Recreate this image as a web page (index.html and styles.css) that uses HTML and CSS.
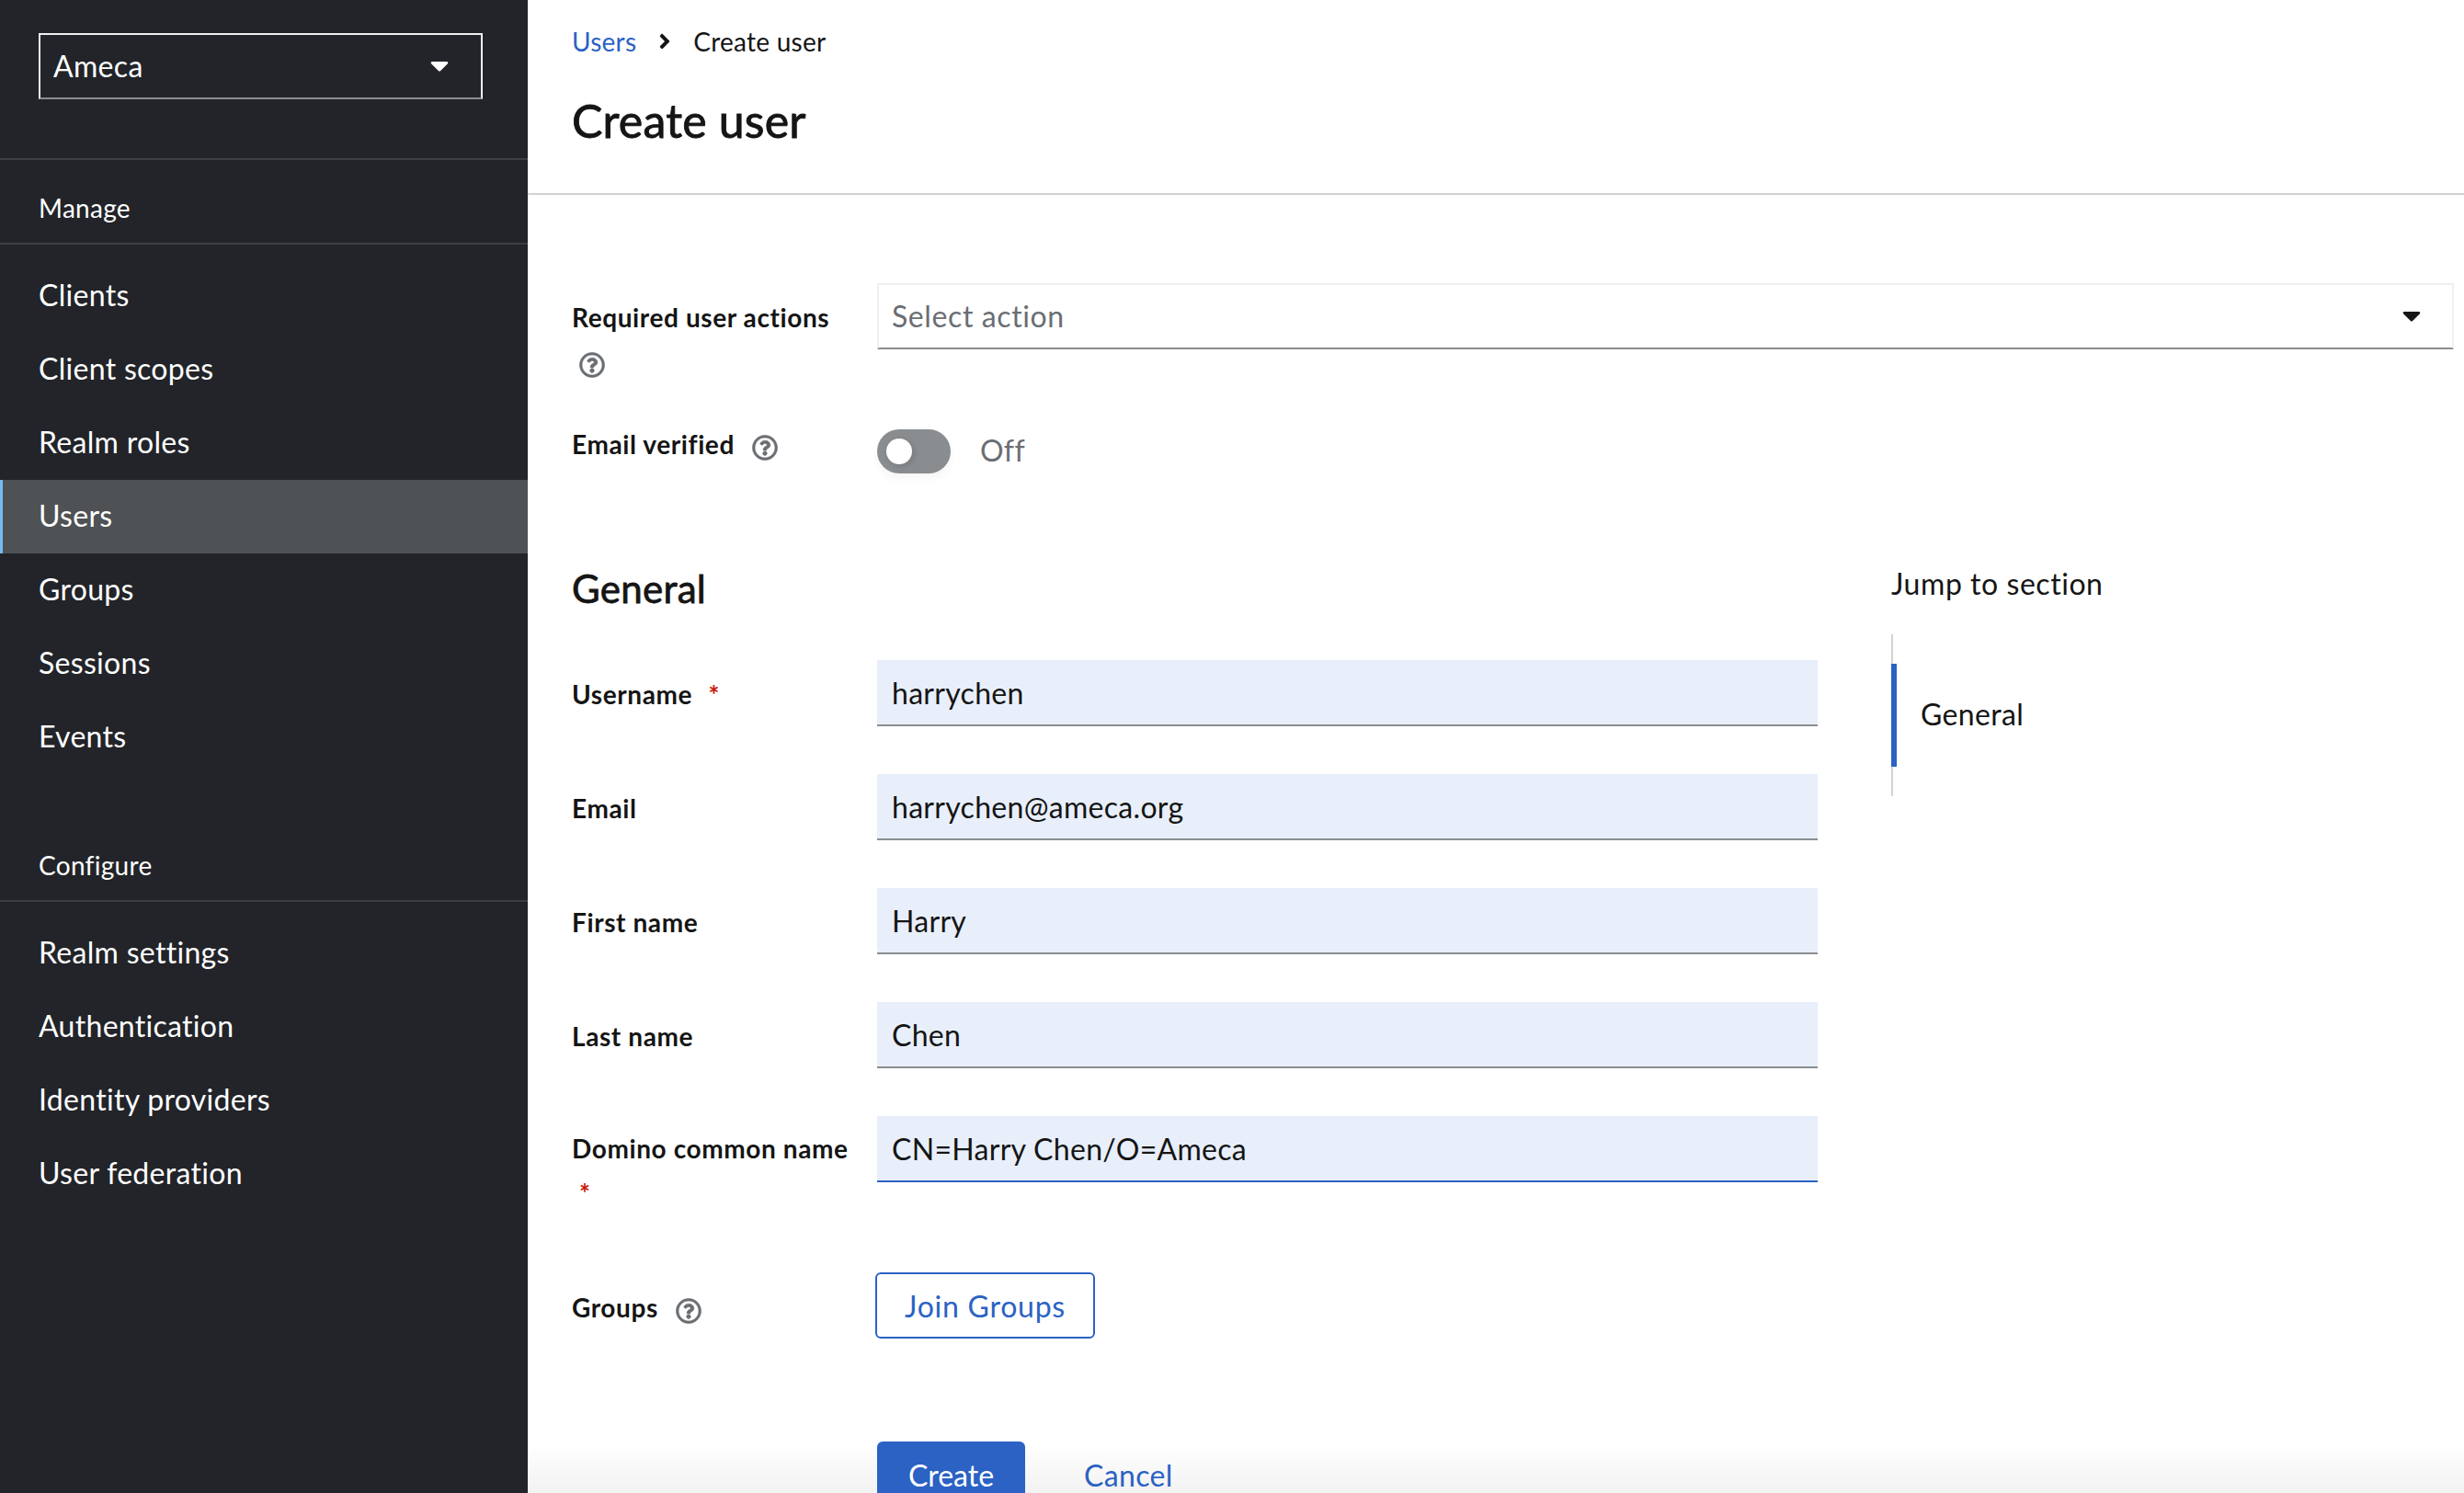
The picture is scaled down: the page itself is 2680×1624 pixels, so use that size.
FILE: index.html
```html
<!DOCTYPE html>
<html lang="en">
<head>
  <meta charset="UTF-8">
  <title>Create user</title>
  <link rel="stylesheet" href="styles.css">
</head>
<body>

<div class="app">
  <aside class="sidebar">
    <div class="realm-wrap">
      <div class="realm-select">
        <span>Ameca</span>
        <svg class="caret" viewBox="0 0 320 512"><path d="M31.3 192h257.3c17.8 0 26.7 21.5 14.1 34.1L174.1 354.8c-7.8 7.8-20.5 7.8-28.3 0L17.2 226.1C4.6 213.5 13.5 192 31.3 192z"/></svg>
      </div>
    </div>

    <div class="nav-title nav-title-first">Manage</div>
    <nav class="nav-list">
      <a class="nav-item">Clients</a>
      <a class="nav-item">Client scopes</a>
      <a class="nav-item">Realm roles</a>
      <a class="nav-item active">Users</a>
      <a class="nav-item">Groups</a>
      <a class="nav-item">Sessions</a>
      <a class="nav-item">Events</a>
    </nav>

    <div class="nav-title">Configure</div>
    <nav class="nav-list">
      <a class="nav-item">Realm settings</a>
      <a class="nav-item">Authentication</a>
      <a class="nav-item">Identity providers</a>
      <a class="nav-item">User federation</a>
    </nav>
  </aside>

  <main class="main">
    <header class="page-header">
      <div class="breadcrumb">
        <a class="link">Users</a>
        <svg class="crumb-sep" viewBox="0 0 256 512"><path d="M224.3 273l-136 136c-9.4 9.4-24.6 9.4-33.9 0l-22.6-22.6c-9.4-9.4-9.4-24.6 0-33.9l96.4-96.4-96.4-96.4c-9.4-9.4-9.4-24.6 0-33.9L54.3 103c9.4-9.4 24.6-9.4 33.9 0l136 136c9.5 9.4 9.5 24.6.1 34z"/></svg>
        <span>Create user</span>
      </div>
      <h1 class="page-title">Create user</h1>
    </header>

    <section class="content">
      <div class="row row-actions">
        <label class="label label-wrap">
          <span>Required user actions</span>
          <svg class="help help-below" viewBox="0 0 512 512"><use href="#q"/></svg>
        </label>
        <div class="select-box">
          <span>Select action</span>
          <svg class="caret caret-dark" viewBox="0 0 320 512"><path d="M31.3 192h257.3c17.8 0 26.7 21.5 14.1 34.1L174.1 354.8c-7.8 7.8-20.5 7.8-28.3 0L17.2 226.1C4.6 213.5 13.5 192 31.3 192z"/></svg>
        </div>
      </div>

      <div class="row row-verified">
        <label class="label label-verified">
          <span>Email verified</span>
          <svg class="help" viewBox="0 0 512 512"><use href="#q"/></svg>
        </label>
        <div class="switch-wrap">
          <span class="switch"><span class="knob"></span></span>
          <span class="switch-text">Off</span>
        </div>
      </div>

      <div class="split">
        <div class="form-col">
          <h2 class="section-title">General</h2>

          <div class="row field-row">
            <label class="label">Username <span class="req">*</span></label>
            <input class="input" type="text" value="harrychen">
          </div>
          <div class="row field-row">
            <label class="label">Email</label>
            <input class="input" type="text" value="harrychen@ameca.org">
          </div>
          <div class="row field-row">
            <label class="label">First name</label>
            <input class="input" type="text" value="Harry">
          </div>
          <div class="row field-row">
            <label class="label">Last name</label>
            <input class="input" type="text" value="Chen">
          </div>
          <div class="row field-row">
            <label class="label label-wrap">
              <span>Domino common name</span>
              <span class="req req-below">*</span>
            </label>
            <input class="input input-focus" type="text" value="CN=Harry Chen/O=Ameca">
          </div>

          <div class="row groups-row">
            <label class="label">
              <span>Groups</span>
              <svg class="help" viewBox="0 0 512 512"><use href="#q"/></svg>
            </label>
            <div><button class="btn-outline">Join Groups</button></div>
          </div>

          <div class="row actions-row">
            <div></div>
            <div class="actions">
              <button class="btn-primary">Create</button>
              <a class="link cancel">Cancel</a>
            </div>
          </div>
        </div>

        <div class="jump">
          <div class="jump-title">Jump to section</div>
          <div class="jump-list">
            <div class="jump-item">General</div>
          </div>
        </div>
      </div>
    </section>
    <div class="bottom-fade"></div>
  </main>
</div>

<svg class="defs" width="0" height="0">
  <symbol id="q" viewBox="0 0 512 512">
    <path d="M256 8C119.043 8 8 119.083 8 256c0 136.997 111.043 248 248 248s248-111.003 248-248C504 119.083 392.957 8 256 8zm0 448c-110.532 0-200-89.431-200-200 0-110.495 89.472-200 200-200 110.491 0 200 89.471 200 200 0 110.53-89.431 200-200 200zm107.244-255.2c0 67.052-72.421 68.084-72.421 92.863V300c0 6.627-5.373 12-12 12h-45.647c-6.627 0-12-5.373-12-12v-8.659c0-35.745 27.1-50.034 47.579-61.516 17.561-9.845 28.324-16.541 28.324-29.579 0-17.246-21.999-28.693-39.784-28.693-23.189 0-33.894 10.977-48.942 29.969-4.057 5.12-11.46 6.071-16.666 2.124l-27.824-21.098c-5.107-3.872-6.251-11.066-2.644-16.363C184.846 131.491 214.94 112 261.794 112c49.071 0 101.45 38.304 101.45 88.8zM298 368c0 23.159-18.841 42-42 42s-42-18.841-42-42 18.841-42 42-42 42 18.841 42 42z"/>
  </symbol>
</svg>

</body>
</html>
```

FILE: styles.css
```css
* {
  box-sizing: border-box;
}
html, body {
  height: 100%;
}
body {
  margin: 0;
  overflow: hidden;
  background: #fff;
  color: #151515;
  font-family: "Lato", "Noto Sans", sans-serif;
  font-size: 32px;
  letter-spacing: 0.35px;
}
.defs {
  position: absolute;
}
.app {
  display: flex;
  height: 1624px;
}

/* sidebar */
.sidebar {
  width: 574px;
  flex: none;
  background: #222429;
  color: #fff;
}
.realm-wrap {
  padding: 36px 49px 0 42px;
  height: 174px;
  border-bottom: 2px solid #3c3f42;
}
.realm-select {
  display: flex;
  align-items: center;
  justify-content: space-between;
  height: 72px;
  padding: 0 35px 2px 14px;
  border: 2px solid #f0f0f0;
  border-bottom-color: #8a8d90;
}
.caret {
  width: 20px;
  height: 32px;
  fill: #fff;
}
.caret-dark {
  fill: #151515;
}
.nav-title {
  display: flex;
  align-items: center;
  height: 92px;
  padding: 14px 0 0 42px;
  font-size: 28px;
  letter-spacing: 0.3px;
  border-bottom: 2px solid #3c3f42;
}
.nav-list {
  padding-top: 16px;
}
.nav-list + .nav-title {
  margin-top: 55px;
  height: 84px;
  padding-top: 6px;
}
.nav-item {
  display: flex;
  align-items: center;
  height: 80px;
  padding: 0 0 3px 42px;
  color: #fff;
  letter-spacing: 0.3px;
}
.nav-item.active {
  background: #4f5255;
  border-left: 3px solid #73bcf7;
  padding-left: 39px;
}

/* page */
.main {
  flex: 1;
  position: relative;
  min-width: 0;
}
.page-header {
  height: 212px;
  padding: 26px 0 0 48px;
  border-bottom: 2px solid #d2d2d2;
}
.breadcrumb {
  display: flex;
  align-items: center;
  gap: 24px;
  height: 38px;
  font-size: 28px;
  letter-spacing: 0.25px;
}
.crumb-sep {
  width: 14px;
  height: 26px;
  fill: #151515;
}
.link {
  color: #2b62c4;
}
.page-title {
  margin: 38px 0 0;
  font-size: 50px;
  font-weight: 400;
  letter-spacing: 0.2px;
  line-height: 58px;
  -webkit-text-stroke: 0.9px #151515;
}
.content {
  padding: 96px 11px 0 48px;
}
.row {
  display: grid;
  grid-template-columns: 332px 1fr;
}
.label {
  font-size: 28px;
  font-weight: 700;
  letter-spacing: 0.6px;
  line-height: 36px;
}
.label-wrap {
  display: block;
  padding-top: 19px;
}
.label-wrap span {
  display: block;
}
.help {
  width: 28px;
  height: 28px;
  fill: #6a6e73;
  stroke: #6a6e73;
  stroke-width: 10;
  vertical-align: -7px;
  margin-left: 12px;
}
.help-below {
  display: block;
  margin: 20px 0 0 8px;
}
.req {
  color: #c9190b;
  margin-left: 10px;
}
.req-below {
  margin: 12px 0 0 8px;
}
.select-box {
  display: flex;
  align-items: center;
  justify-content: space-between;
  height: 72px;
  padding: 0 34px 2px 14px;
  border: 2px solid #f0f0f0;
  border-bottom-color: #8a8d90;
  color: #6a6e73;
  letter-spacing: 0.6px;
}
.row-actions {
  height: 159px;
}
.row-verified {
  height: 149px;
}
.label-verified {
  margin-top: -2px;
}
.switch-wrap {
  display: flex;
  align-items: center;
  gap: 32px;
  height: 48px;
}
.switch {
  display: flex;
  align-items: center;
  width: 80px;
  height: 48px;
  padding-left: 10px;
  border-radius: 24px;
  background: #8a8d90;
  box-shadow: 0 6px 10px rgba(0,0,0,0.04);
}
.knob {
  width: 28px;
  height: 28px;
  border-radius: 50%;
  background: #fff;
  box-shadow: 2px 2px 6px rgba(0,0,0,0.15);
}
.switch-text {
  color: #6a6e73;
  padding-bottom: 3px;
}

/* form */
.split {
  display: flex;
  gap: 80px;
}
.form-col {
  width: 1355px;
  flex: none;
}
.section-title {
  margin: 0 0 54px;
  font-size: 42px;
  font-weight: 400;
  letter-spacing: 0.3px;
  line-height: 48px;
  -webkit-text-stroke: 0.8px #151515;
}
.field-row {
  height: 124px;
}
.field-row .label {
  padding-top: 19px;
}
.field-row .label-wrap {
  padding-top: 17px;
}
.input {
  width: 100%;
  height: 72px;
  padding: 0 16px;
  border: 0;
  border-bottom: 2px solid #8a8d90;
  background: #e8effb;
  color: #151515;
  font: inherit;
  letter-spacing: 0.3px;
  outline: none;
}
.input-focus {
  border-bottom-color: #2b62c4;
}
.groups-row {
  height: 230px;
  padding-top: 46px;
}
.groups-row .label {
  padding-top: 20px;
}
.btn-outline {
  height: 72px;
  margin-left: -2px;
  padding: 0 30px;
  background: #fff;
  border: 2px solid #2b62c4;
  border-radius: 6px;
  color: #2b62c4;
  font: inherit;
  letter-spacing: 0.75px;
}
.actions {
  display: flex;
  align-items: center;
  gap: 64px;
  position: relative;
  z-index: 1;
}
.btn-primary {
  width: 161px;
  height: 72px;
  background: #2b62c4;
  border: 0;
  border-radius: 6px;
  color: #fff;
  font: inherit;
}

/* jump links */
.jump {
  flex: 1;
}
.jump-title {
  line-height: 38px;
  letter-spacing: 0.55px;
}
.jump-list {
  margin-top: 36px;
  padding: 32px 0;
  border-left: 2px solid #d2d2d2;
}
.jump-item {
  display: flex;
  align-items: center;
  height: 112px;
  margin-left: -2px;
  padding: 0 0 3px 26px;
  border-left: 6px solid #2b62c4;
}

.bottom-fade {
  position: absolute;
  left: 0;
  right: 0;
  bottom: 0;
  height: 54px;
  background: linear-gradient(rgba(240,240,240,0), rgba(240,240,240,0.85));
  pointer-events: none;
}
```
